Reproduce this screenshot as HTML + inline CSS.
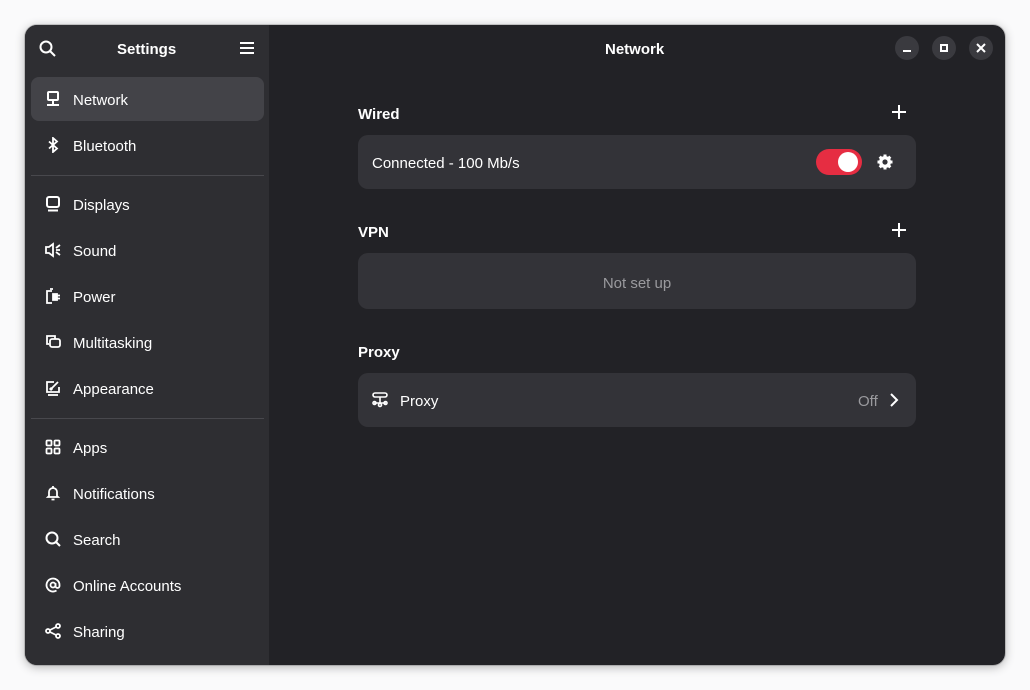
<!DOCTYPE html>
<html><head><meta charset="utf-8"><style>
*{margin:0;padding:0;box-sizing:border-box}
body{width:1030px;height:690px;background:#fafafb;font-family:"Liberation Sans","Noto Sans CJK SC",sans-serif;color:#fff;position:relative;overflow:hidden}
.win{position:absolute;left:25px;top:25px;width:980px;height:640px;border-radius:12px;background:#222226;overflow:hidden;box-shadow:0 2px 10px rgba(0,0,0,.3),0 0 0 1px rgba(0,0,0,.15)}
.side{position:absolute;left:0;top:0;width:244px;height:640px;background:#2e2e32}
.t{position:absolute;font-size:15px;white-space:nowrap;margin-top:2px}
.b{font-weight:bold}
.item{position:absolute;left:6px;width:233px;height:44px;border-radius:8px}
.item .t{left:42px;top:13px}
.item svg{position:absolute;left:14px;top:14px}
.sep{position:absolute;left:6px;width:233px;height:1px;background:#48484d}
.card{position:absolute;left:333px;width:558px;background:#333338;border-radius:10px}
.wb{position:absolute;top:11px;width:24px;height:24px;border-radius:12px;background:#3a3a3f}
svg{display:block}
</style></head><body>
<div class="win">
 <div class="side">
  <svg style="position:absolute;left:14px;top:15px" width="18" height="18" viewBox="0 0 18 18" fill="none" stroke="#fff" stroke-width="2"><circle cx="7" cy="7" r="5.5"/><path d="M11 11l5 5"/></svg>
  <div class="t b" style="left:92px;top:14px">Settings</div>
  <svg style="position:absolute;left:214px;top:16px" width="16" height="14" viewBox="0 0 16 14" stroke="#fff" stroke-width="2"><path d="M1 2h14M1 7h14M1 12h14"/></svg>

  <div class="item" style="top:52px;background:#434348">
   <svg width="16" height="16" viewBox="0 0 16 16" fill="none" stroke="#fff" stroke-width="2"><rect x="3" y="1" width="10" height="8" rx="1"/><path d="M8 10v3M2 14h12"/></svg>
   <div class="t">Network</div></div>
  <div class="item" style="top:98px">
   <svg width="16" height="16" viewBox="0 0 16 16" fill="none" stroke="#fff" stroke-width="1.8"><path d="M4 4.5l8 7-4 3.5V1l4 3.5-8 7"/></svg>
   <div class="t">Bluetooth</div></div>
  <div class="sep" style="top:150px"></div>
  <div class="item" style="top:157px">
   <svg width="16" height="16" viewBox="0 0 16 16" fill="none" stroke="#fff" stroke-width="2"><rect x="2" y="1" width="12" height="10" rx="2"/><path d="M3 14.5h10"/></svg>
   <div class="t">Displays</div></div>
  <div class="item" style="top:203px">
   <svg width="16" height="16" viewBox="0 0 16 16" fill="none" stroke="#fff" stroke-width="1.8"><path d="M1 5h3l4-3v12l-4-3H1z"/><path d="M15 3l-4 3M11 8h4M15 13l-4-3"/></svg>
   <div class="t">Sound</div></div>
  <div class="item" style="top:249px">
   <svg width="16" height="16" viewBox="0 0 16 16" fill="none" stroke="#fff" stroke-width="1.8"><path d="M5 1h3M7 3H2v12h5"/><path d="M8 6h4v6H8z" fill="#fff"/><path d="M12 7.5h3M12 10.5h3"/></svg>
   <div class="t">Power</div></div>
  <div class="item" style="top:295px">
   <svg width="16" height="16" viewBox="0 0 16 16" fill="none" stroke="#fff" stroke-width="1.8"><path d="M4 10H2V2h8v3"/><rect x="5" y="5" width="10" height="8" rx="2"/></svg>
   <div class="t">Multitasking</div></div>
  <div class="item" style="top:341px">
   <svg width="16" height="16" viewBox="0 0 16 16" fill="none" stroke="#fff" stroke-width="1.8"><path d="M9 2H2v10h12V7"/><path d="M3 15h10"/><path d="M6 9l7-7" /><path d="M5 10l2-2" stroke-width="3"/></svg>
   <div class="t">Appearance</div></div>
  <div class="sep" style="top:393px"></div>
  <div class="item" style="top:400px">
   <svg width="16" height="16" viewBox="0 0 16 16" fill="none" stroke="#fff" stroke-width="1.8"><rect x="1.5" y="1.5" width="5" height="5" rx="1"/><rect x="9.5" y="1.5" width="5" height="5" rx="1"/><rect x="1.5" y="9.5" width="5" height="5" rx="1"/><rect x="9.5" y="9.5" width="5" height="5" rx="1"/></svg>
   <div class="t">Apps</div></div>
  <div class="item" style="top:446px">
   <svg width="16" height="16" viewBox="0 0 16 16" fill="none" stroke="#fff" stroke-width="1.8"><path d="M4 11V7a4 4 0 018 0v4l1 1H3z"/><path d="M8 1v2M6.5 14.5h3"/></svg>
   <div class="t">Notifications</div></div>
  <div class="item" style="top:492px">
   <svg width="16" height="16" viewBox="0 0 16 16" fill="none" stroke="#fff" stroke-width="2"><circle cx="7" cy="7" r="5.5"/><path d="M11 11l4 4"/></svg>
   <div class="t">Search</div></div>
  <div class="item" style="top:538px">
   <svg width="16" height="16" viewBox="0 0 16 16" fill="none" stroke="#fff" stroke-width="1.8"><circle cx="8" cy="8" r="2.5"/><path d="M10.5 6v3a2 2 0 004 0V8a6.5 6.5 0 10-3 5.5"/></svg>
   <div class="t">Online Accounts</div></div>
  <div class="item" style="top:584px">
   <svg width="16" height="16" viewBox="0 0 16 16" fill="none" stroke="#fff" stroke-width="1.8"><circle cx="3" cy="8" r="2"/><circle cx="13" cy="3" r="2"/><circle cx="13" cy="13" r="2"/><path d="M5 7l6-3M5 9l6 3"/></svg>
   <div class="t">Sharing</div></div>
 </div>

 <div class="t b" style="left:580px;top:14px">Network</div>
 <div class="wb" style="left:870px"><div style="position:absolute;left:8px;top:14px;width:8px;height:2px;background:#fff"></div></div>
 <div class="wb" style="left:907px"><div style="position:absolute;left:8px;top:8px;width:8px;height:8px;border:2px solid #fff"></div></div>
 <div class="wb" style="left:944px"><svg style="position:absolute;left:7px;top:7px" width="10" height="10" viewBox="0 0 10 10" stroke="#fff" stroke-width="2"><path d="M1 1l8 8M9 1L1 9"/></svg></div>

 <div class="t b" style="left:333px;top:79px">Wired</div>
 <svg style="position:absolute;left:866px;top:79px" width="16" height="16" viewBox="0 0 16 16" stroke="#fff" stroke-width="2"><path d="M8 1v14M1 8h14"/></svg>
 <div class="card" style="top:110px;height:54px">
  <div class="t" style="left:14px;top:18px">Connected - 100 Mb/s</div>
  <div style="position:absolute;left:458px;top:14px;width:46px;height:26px;border-radius:13px;background:#e62d42"><div style="position:absolute;left:22px;top:3px;width:20px;height:20px;border-radius:10px;background:#fff"></div></div>
  <svg style="position:absolute;left:518px;top:18px" width="18" height="18" viewBox="0 0 18 18"><g fill="#fff"><circle cx="9" cy="9" r="6"/><g stroke="#fff" stroke-width="3"><path d="M9 1.5v15M1.5 9h15M3.7 3.7l10.6 10.6M14.3 3.7L3.7 14.3"/></g></g><circle cx="9" cy="9" r="2.6" fill="#333338"/></svg>
 </div>

 <div class="t b" style="left:333px;top:197px">VPN</div>
 <svg style="position:absolute;left:866px;top:197px" width="16" height="16" viewBox="0 0 16 16" stroke="#fff" stroke-width="2"><path d="M8 1v14M1 8h14"/></svg>
 <div class="card" style="top:228px;height:56px">
  <div class="t" style="left:0;width:558px;text-align:center;top:20px;color:#9a9a9e">Not set up</div>
 </div>

 <div class="t b" style="left:333px;top:317px">Proxy</div>
 <div class="card" style="top:348px;height:54px">
  <svg style="position:absolute;left:14px;top:19px" width="16" height="16" viewBox="0 0 16 16" fill="none" stroke="#fff" stroke-width="1.6"><rect x="1" y="1" width="14" height="4" rx="2"/><path d="M8 5v6M2 11h12"/><circle cx="2.5" cy="11" r="1.5"/><circle cx="13.5" cy="11" r="1.5"/><circle cx="8" cy="13" r="1.5"/></svg>
  <div class="t" style="left:42px;top:18px">Proxy</div>
  <div class="t" style="left:500px;top:18px;color:#9a9a9e">Off</div>
  <svg style="position:absolute;left:531px;top:19px" width="10" height="16" viewBox="0 0 10 16" fill="none" stroke="#fff" stroke-width="2"><path d="M2 2l6 6-6 6"/></svg>
 </div>
</div>
</body></html>
